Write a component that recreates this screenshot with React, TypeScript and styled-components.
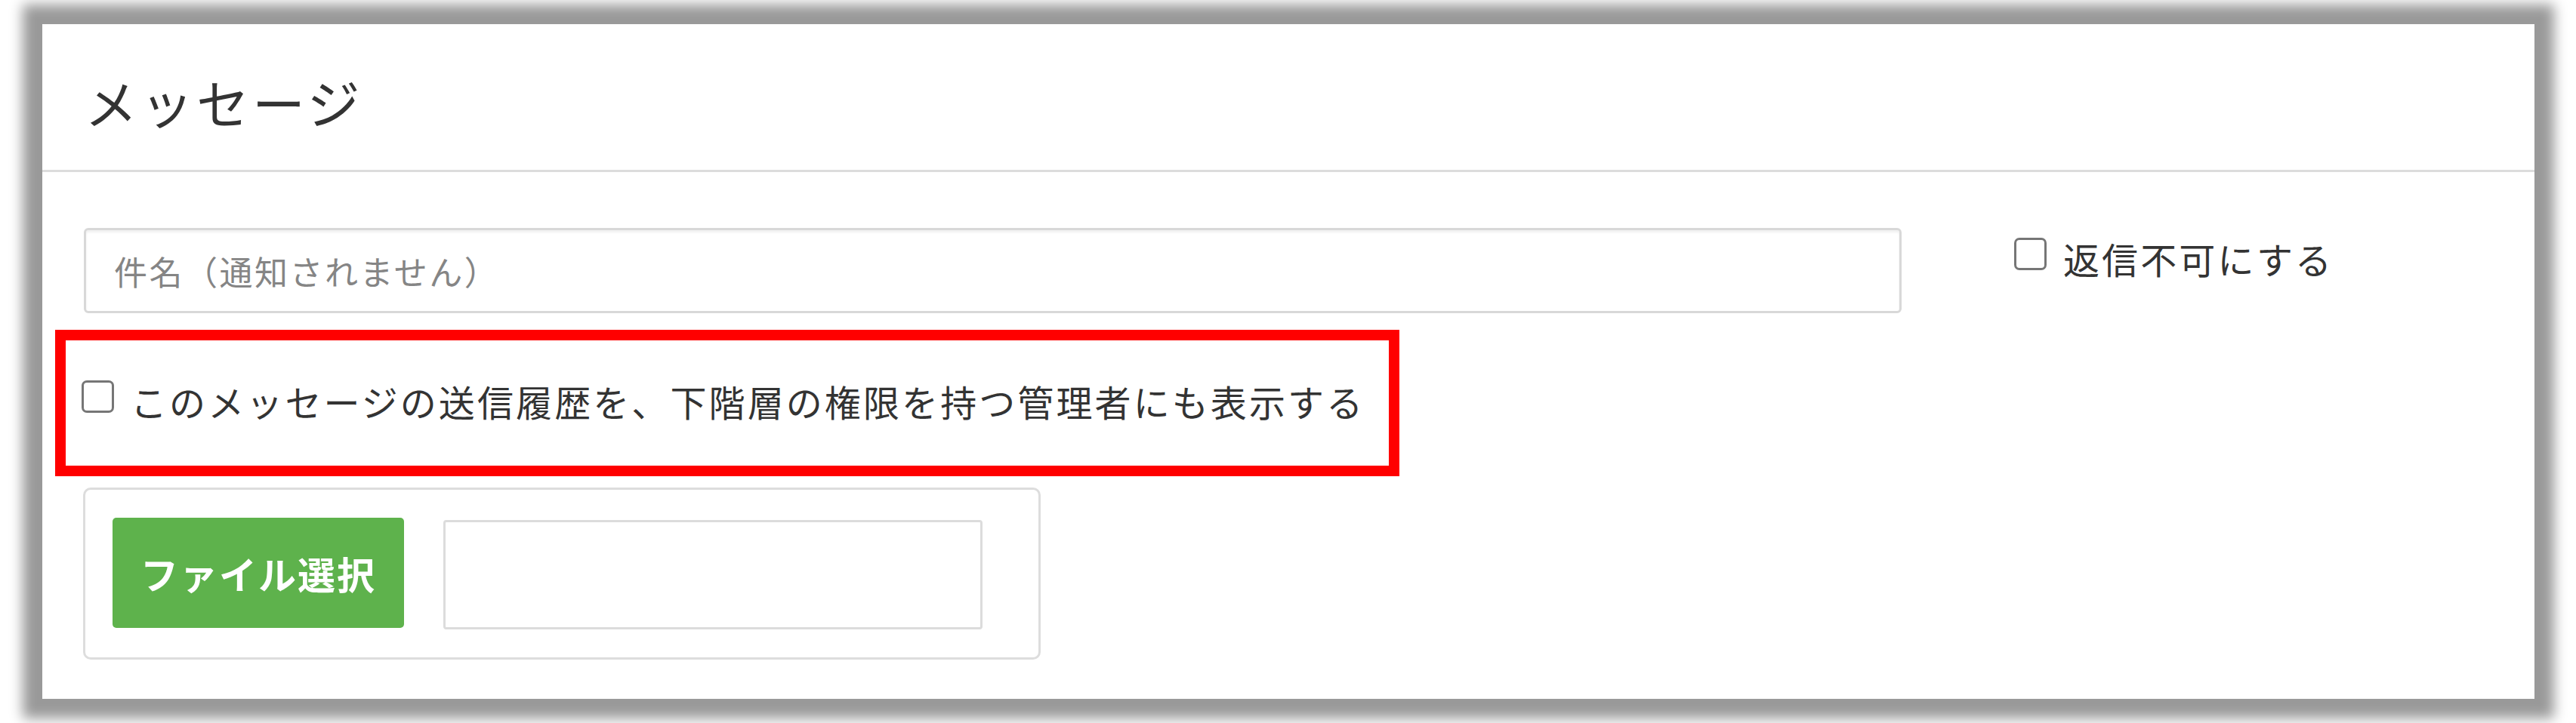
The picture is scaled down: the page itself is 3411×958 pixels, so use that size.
import React from "react";
import styled, { createGlobalStyle } from "styled-components";

const GlobalStyle = createGlobalStyle`
  html, body {
    margin: 0;
    padding: 0;
    background: #fff;
  }
  body {
    font-family: "Noto Sans CJK JP", "Noto Sans", sans-serif;
    color: #333;
  }
  *, *::before, *::after {
    box-sizing: border-box;
  }
`;

const App: React.FC = () => {
  return (
    <>
      <GlobalStyle />
      <Page>
        <Panel>
          <PanelHeader>
            <Title>メッセージ</Title>
          </PanelHeader>

          <PanelBody>
            <SubjectRow>
              <SubjectInput type="text" placeholder="件名（通知されません）" />
              <CheckLabel $offsetLeft={149} $offsetTop={10}>
                <CheckBox type="checkbox" />
                <span>返信不可にする</span>
              </CheckLabel>
            </SubjectRow>

            <HighlightRow>
              <CheckLabel>
                <CheckBox type="checkbox" />
                <span>このメッセージの送信履歴を、下階層の権限を持つ管理者にも表示する</span>
              </CheckLabel>
            </HighlightRow>

            <FileBox>
              <FileButton type="button">ファイル選択</FileButton>
              <FileName type="text" readOnly />
            </FileBox>
          </PanelBody>
        </Panel>
      </Page>
    </>
  );
};

export default App;

const Page = styled.div`
  width: 3411px;
  height: 958px;
  padding: 32px 55px 0 56px;
  overflow: hidden;
`;

const Panel = styled.div`
  height: 894px;
  background: #fff;
  box-shadow: 0 0 16px 26px rgba(0, 0, 0, 0.4);
`;

const PanelHeader = styled.div`
  display: flex;
  align-items: center;
  height: 196px;
  padding: 12px 0 0 56px;
  border-bottom: 3px solid #dcdcdc;
`;

const Title = styled.h2`
  margin: 0;
  font-size: 70px;
  font-weight: 400;
  line-height: 1;
  letter-spacing: 4px;
  color: #333;
`;

const PanelBody = styled.div`
  padding: 74px 55px 51px 55px;
`;

const SubjectRow = styled.div`
  display: grid;
  grid-template-columns: 2407px auto;
  align-items: start;
`;

const SubjectInput = styled.input`
  height: 113px;
  width: 100%;
  padding: 0 37px;
  border: 3px solid #d8d8d8;
  border-radius: 6px;
  box-shadow: inset 0 3px 3px rgba(0, 0, 0, 0.06);
  font-family: inherit;
  font-size: 44px;
  letter-spacing: 2.5px;
  color: #333;
  outline: none;

  &::placeholder {
    color: #858585;
  }
`;

const CheckLabel = styled.label<{ $offsetLeft?: number; $offsetTop?: number }>`
  display: inline-flex;
  align-items: flex-start;
  gap: 22px;
  margin-left: ${(p) => p.$offsetLeft ?? 0}px;
  margin-top: ${(p) => p.$offsetTop ?? 0}px;
  font-size: 48px;
  line-height: 60px;
  letter-spacing: 3.1px;
  color: #333;
  white-space: nowrap;
`;

const CheckBox = styled.input`
  appearance: none;
  flex-shrink: 0;
  width: 43px;
  height: 43px;
  margin: 3px 0 0 0;
  border: 3px solid #767676;
  border-radius: 7px;
  background: #fff;
`;

const HighlightRow = styled.div`
  position: relative;
  display: inline-flex;
  margin-top: 86px;
  margin-left: -3px;

  &::after {
    content: "";
    position: absolute;
    left: -35px;
    top: -64px;
    width: 1780px;
    height: 194px;
    border: 14px solid #ff0000;
    pointer-events: none;
  }
`;

const FileBox = styled.div`
  display: flex;
  align-items: flex-start;
  gap: 52px;
  width: 1268px;
  height: 228px;
  margin-top: 85px;
  margin-left: -1px;
  padding: 37px 74px 37px 36px;
  border: 3px solid #dddddd;
  border-radius: 10px;
`;

const FileButton = styled.button`
  width: 386px;
  height: 146px;
  flex-shrink: 0;
  border: none;
  border-radius: 5px;
  background: #5eb24c;
  color: #fff;
  font-family: inherit;
  font-size: 50px;
  font-weight: 700;
  letter-spacing: 2px;
`;

const FileName = styled.input`
  width: 714px;
  height: 145px;
  margin-top: 3px;
  border: 3px solid #dcdcdc;
  border-radius: 4px;
  background: #fff;
  outline: none;
`;
